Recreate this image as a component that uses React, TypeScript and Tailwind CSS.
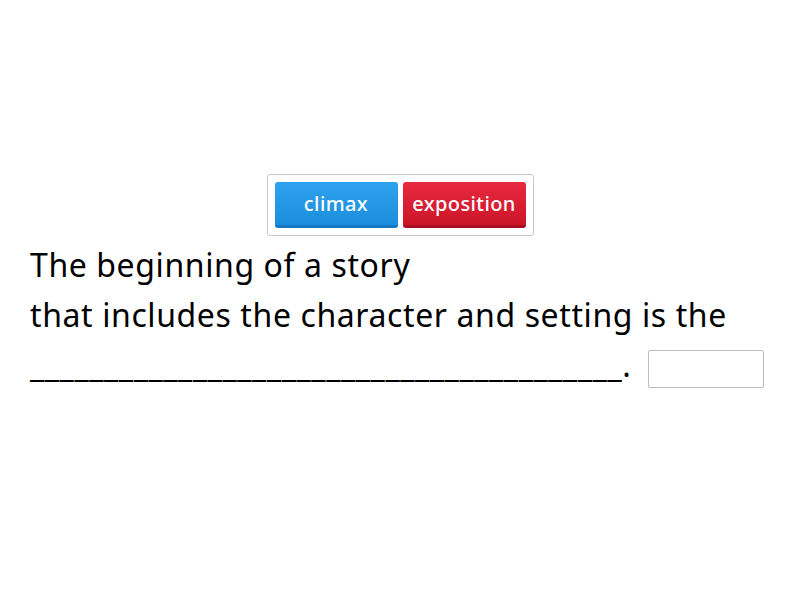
export default function App() {
  const answers = [
    { label: 'climax', cls: 'bg-gradient-to-b from-[#2ea3ef] to-[#1a8ddc] border-b-[3px] border-[#1578c0]' },
    { label: 'exposition', cls: 'bg-gradient-to-b from-[#e8283f] to-[#cc1529] border-b-[3px] border-[#a80f20]' },
  ];

  return (
    <div className="w-[800px] h-[600px] bg-white text-black font-['Noto_Sans',sans-serif] pt-[174px]">
      <div className="flex justify-center">
        <div className="flex gap-[5px] p-[7px] border border-[#c8c8c8] rounded-[3px] bg-white">
          {answers.map((a) => (
            <div
              key={a.label}
              className={`h-[46px] px-[8px] min-w-[123px] flex items-center justify-center rounded-[3px] text-white text-[20px] font-medium tracking-[0.4px] leading-none ${a.cls}`}
            >
              {a.label}
            </div>
          ))}
        </div>
      </div>
      <div className="pl-[30px] pt-[4px] text-[32px] leading-[50px] tracking-[0.6px]">
        <div>The beginning of a story</div>
        <div>that includes the character and setting is the</div>
        <div className="flex items-center">
          <span>________________________________________.</span>
          <span className="ml-[16px] w-[116px] h-[38px] border border-[#bdbdbd] rounded-[2px] inline-block mt-[8px]"></span>
        </div>
      </div>
    </div>
  );
}
